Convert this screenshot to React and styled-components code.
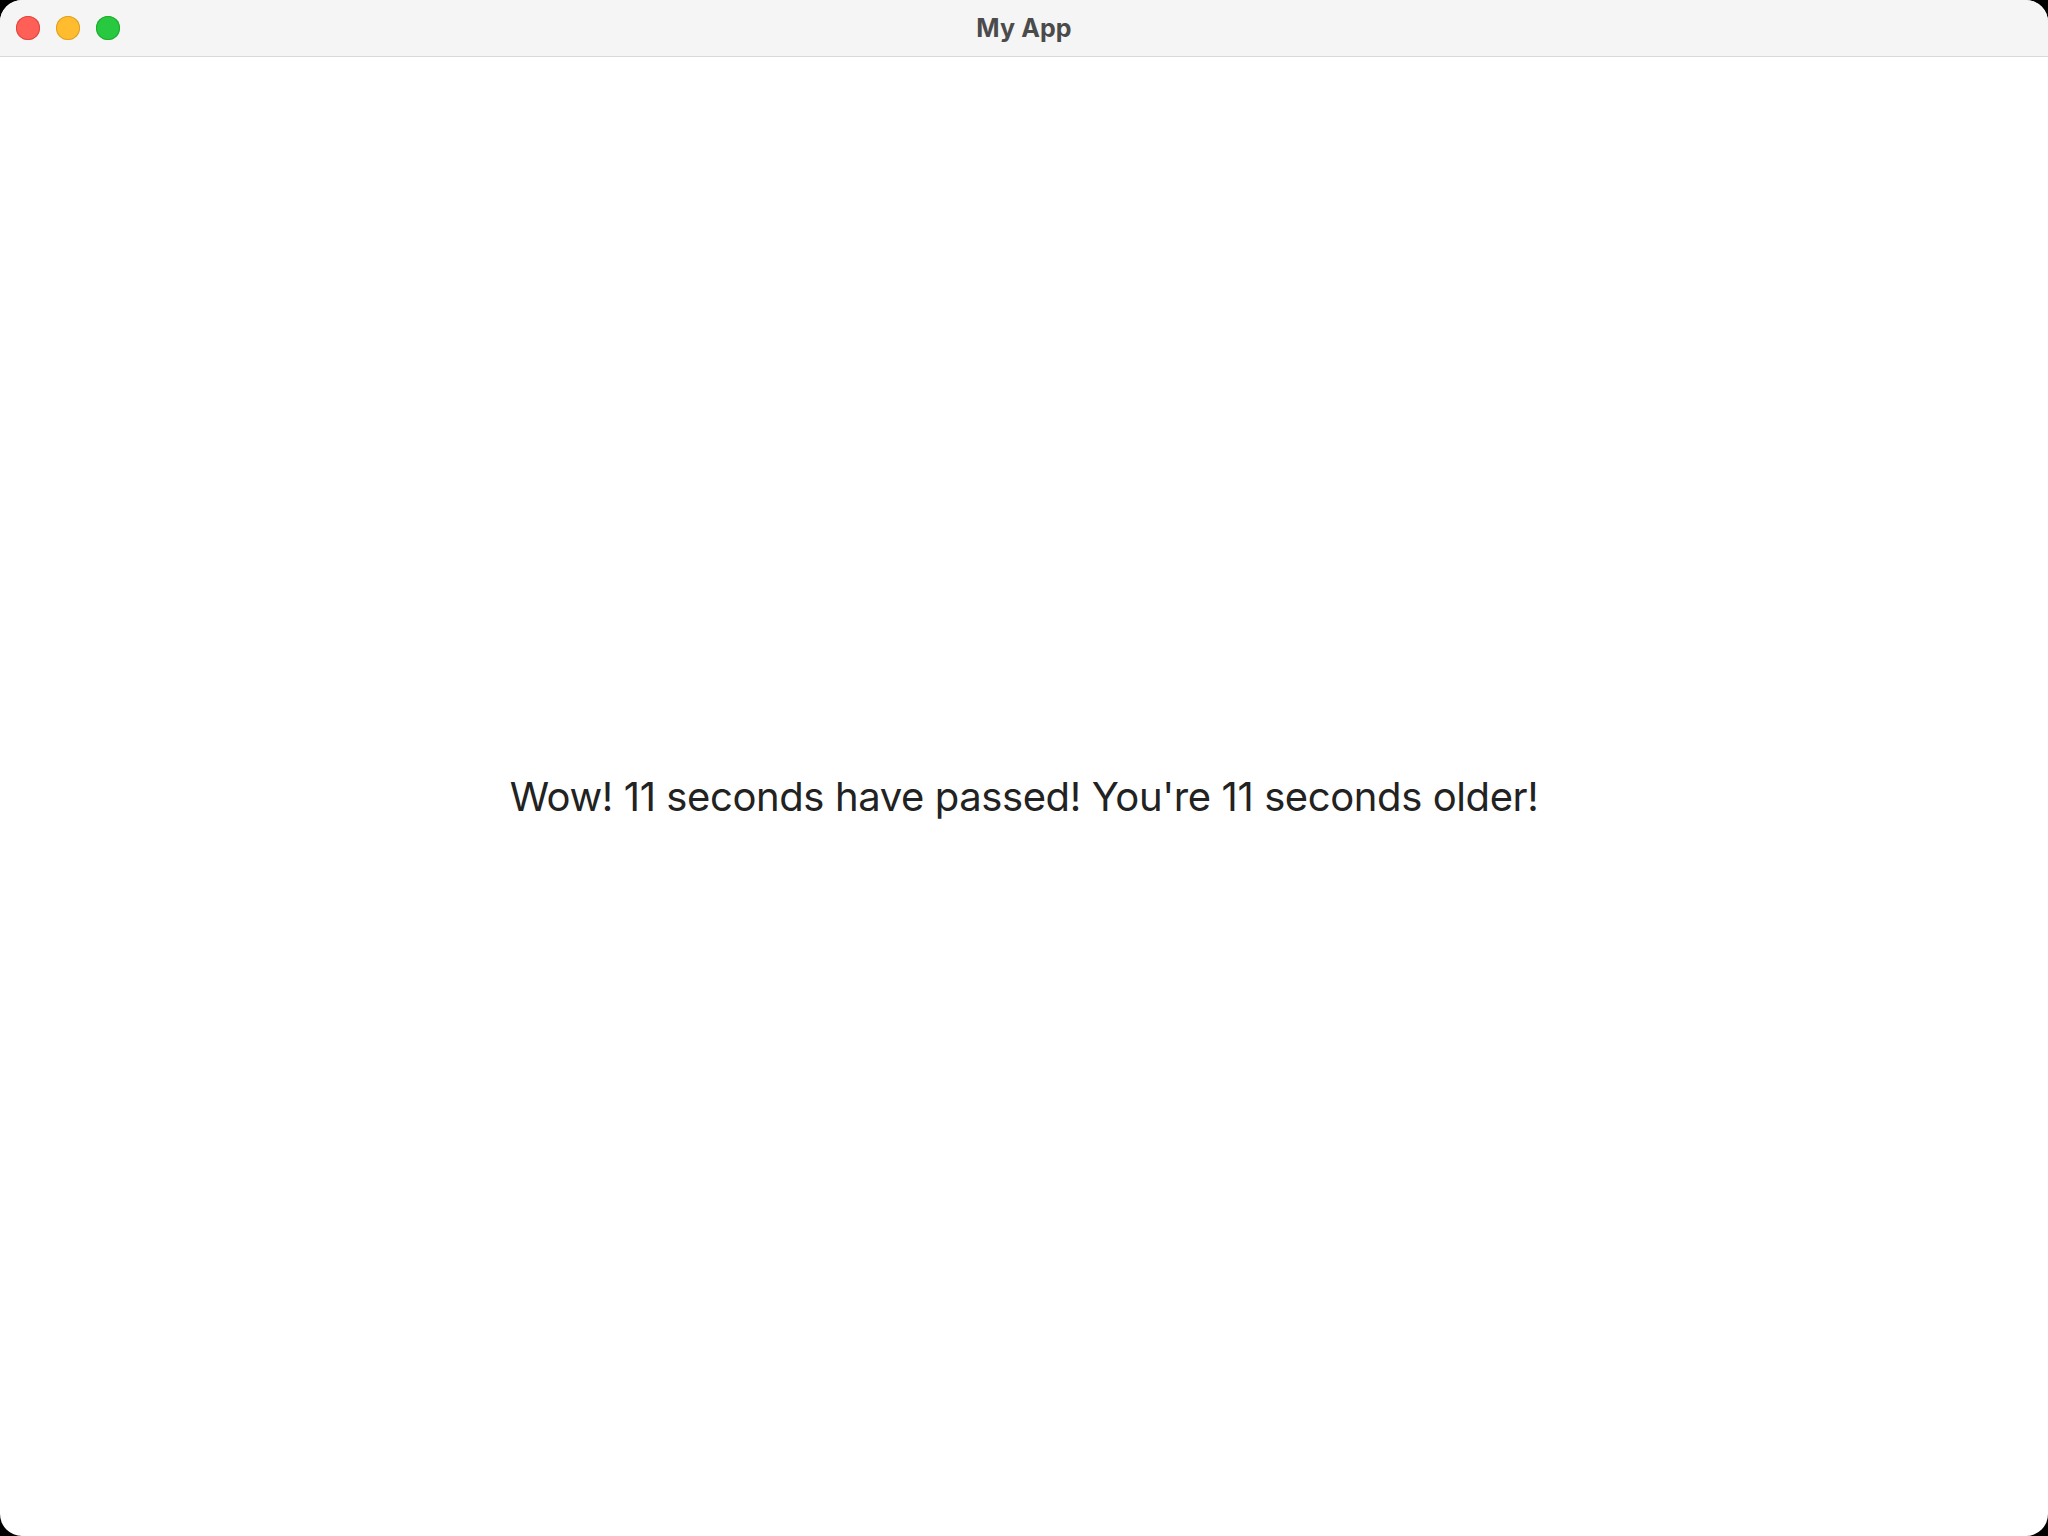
import React from 'react';
import styled, { createGlobalStyle } from 'styled-components';

const GlobalStyle = createGlobalStyle`
  html, body {
    margin: 0;
    padding: 0;
    background: #000;
  }
  #root {
    height: 100vh;
  }
`;

const Window = styled.div`
  height: 100vh;
  display: flex;
  flex-direction: column;
  background: #fff;
  border-radius: 22px;
  overflow: hidden;
  font-family: Inter, "Noto Sans", sans-serif;
`;

const TitleBar = styled.div`
  height: 56px;
  flex-shrink: 0;
  position: relative;
  display: flex;
  align-items: center;
  justify-content: center;
  background: #f5f5f5;
  border-bottom: 1px solid #d9d9d9;
`;

const Lights = styled.div`
  position: absolute;
  left: 16px;
  top: 16px;
  display: flex;
  gap: 16px;
`;

const Light = styled.span`
  width: 24px;
  height: 24px;
  border-radius: 50%;
  background: ${({ color }) => color};
  box-shadow: inset 0 0 0 1px ${({ edge }) => edge};
`;

const Title = styled.div`
  font-size: 25px;
  font-weight: 700;
  color: #4b4b4b;
  letter-spacing: 0.1px;
`;

const Content = styled.main`
  flex: 1;
  display: flex;
  align-items: center;
  justify-content: center;
`;

const Message = styled.p`
  margin: 0;
  font-size: 40px;
  color: #222;
  letter-spacing: -0.4px;
`;

const App = () => {
  const seconds = 11;

  return (
    <>
      <GlobalStyle />
      <Window>
        <TitleBar>
          <Lights>
            <Light color="#fe5f57" edge="#e2463f" />
            <Light color="#febc2e" edge="#dea123" />
            <Light color="#28c840" edge="#1dad2b" />
          </Lights>
          <Title>My App</Title>
        </TitleBar>
        <Content>
          <Message>
            Wow! {seconds} seconds have passed! You're {seconds} seconds older!
          </Message>
        </Content>
      </Window>
    </>
  );
};

export default App;
